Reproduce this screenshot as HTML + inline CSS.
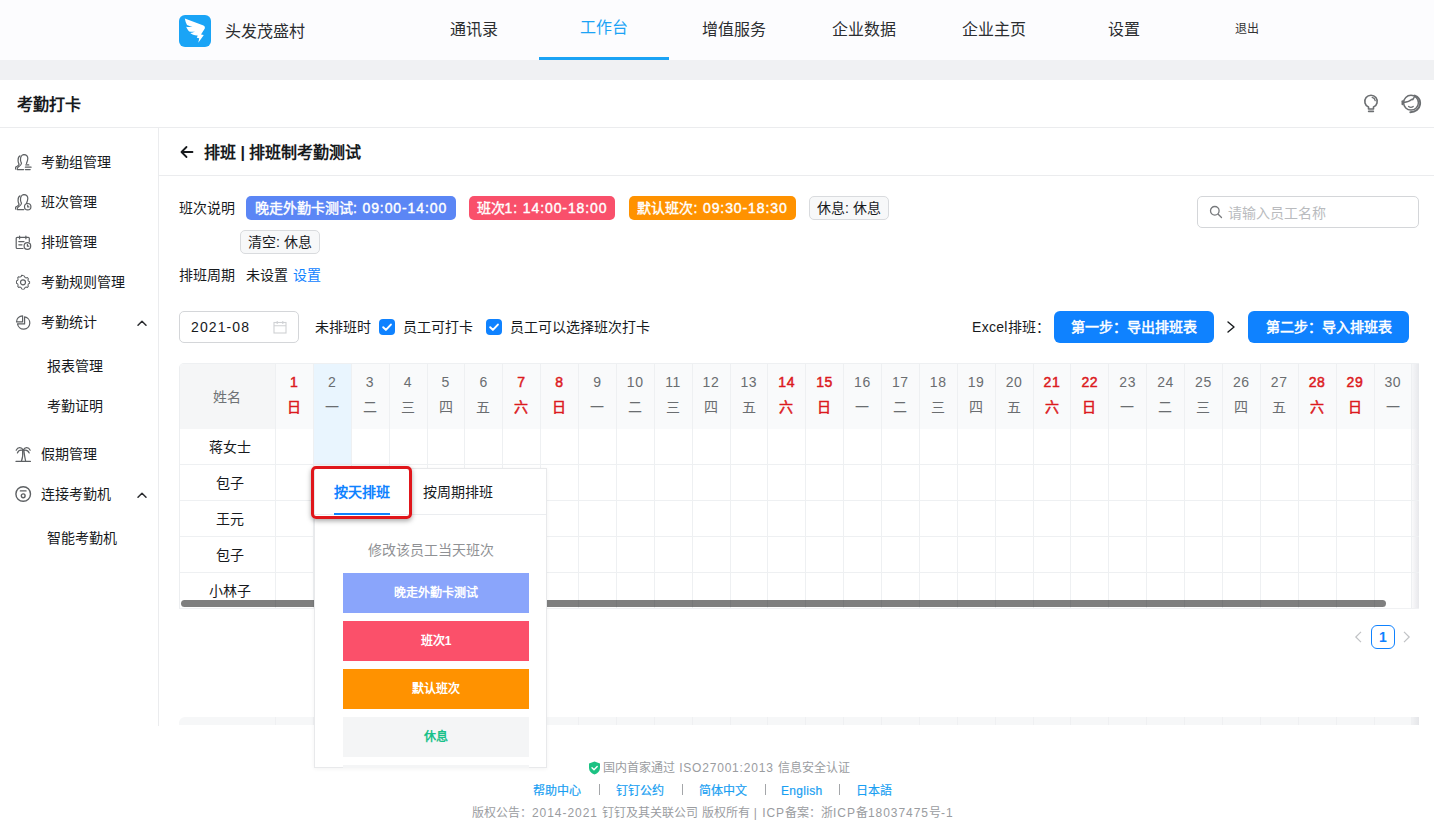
<!DOCTYPE html>
<html lang="zh-CN">
<head>
<meta charset="utf-8">
<title>考勤打卡</title>
<style>
*{box-sizing:border-box;margin:0;padding:0}
html,body{width:1434px;height:830px;overflow:hidden;background:#fff}
body{font-family:"Liberation Sans",sans-serif;font-size:14px;color:#171a1d;position:relative}
.abs{position:absolute}
.t{position:absolute;white-space:nowrap;line-height:20px;height:20px}
.n{letter-spacing:.9px}
#nav{position:absolute;left:0;top:0;width:1434px;height:60px;background:#fcfcfe}
#band{position:absolute;left:0;top:60px;width:1434px;height:20px;background:#f0f1f3}
#logo{position:absolute;left:179px;top:15px;width:32px;height:32px;border-radius:6px;background:#1aa4f6;overflow:hidden}
.nv{position:absolute;top:20px;width:130px;height:20px;line-height:20px;text-align:center;font-size:16px;color:#2b2d30;white-space:nowrap}
.nv.on{color:#1ba3f5;top:18px}
#navline{position:absolute;left:539px;top:57px;width:130px;height:3px;background:#1ba3f5}
#phead{position:absolute;left:0;top:80px;width:1434px;height:48px;background:#fff;border-bottom:1px solid #ebecee}
#side{position:absolute;left:0;top:128px;width:159px;height:598px;border-right:1px solid #ebecee;background:#fff}
.si{position:absolute;left:41px;font-size:14px;line-height:20px;height:20px;white-space:nowrap;color:#171a1d}
.si.sub{left:47px}
.ico{position:absolute;left:15px;width:17px;height:17px}
.chev{position:absolute;left:136px;width:12px;height:8px}
#mhead{position:absolute;left:159px;top:128px;width:1275px;height:48px;border-bottom:1px solid #ebecee}
.tag{position:absolute;height:24px;line-height:24px;border-radius:5px;color:#fff;font-size:14px;text-align:center;white-space:nowrap;-webkit-text-stroke:.4px #fff}
.tag.g{background:#f7f8f9;border:1px solid #d9dbde;color:#171a1d;line-height:22px;-webkit-text-stroke:0}
.cb{position:absolute;width:16px;height:16px;border-radius:4px;background:#0f82ff}
.btn{position:absolute;top:311px;height:32px;line-height:32px;border-radius:6px;background:#0f82ff;color:#fff;font-size:14px;-webkit-text-stroke:.5px #fff;text-align:center;white-space:nowrap}
#tbl{position:absolute;left:179px;top:363px;width:1240px;height:246px;overflow:hidden;border-radius:5px 0 0 0;border-left:1px solid #eceef0;border-top:1px solid #eef0f2;border-bottom:1px solid #f0f1f3}
#thead{position:absolute;left:0;top:0;width:1240px;height:65px;background:#f9fafb}
#thn{position:absolute;left:0;top:0;width:96px;height:65px;background:#f5f6f7}
.vl{position:absolute;top:0;width:1px;height:245px;background:#eef0f2}
.hl{position:absolute;left:0;width:1240px;height:1px;background:#eef0f2}
.dn{position:absolute;top:8px;width:38px;text-align:center;font-size:14px;line-height:20px;color:#6a6d70;letter-spacing:.6px;text-indent:.6px}
.dw{position:absolute;top:33px;width:38px;text-align:center;font-size:14px;line-height:20px;color:#6a6d70}
.red{color:#dc1a1e;-webkit-text-stroke:.5px #dc1a1e}
.nm{position:absolute;left:-1px;width:97px;text-align:center;font-size:14px;line-height:20px;color:#171a1d;padding-left:4px}
#pop{position:absolute;left:314px;top:468px;width:233px;height:300px;background:#fff;border:1px solid #e8e9eb;box-shadow:0 1px 4px rgba(0,0,0,.05)}
.pb{position:absolute;left:28px;width:186px;height:40px;line-height:40px;text-align:center;color:#fff;font-size:12px;font-weight:bold}
#redbox{position:absolute;left:311px;top:466px;width:101px;height:53px;border:3px solid #e0161b;border-radius:5px;box-shadow:0 2px 5px rgba(0,0,0,.35)}
.ft{position:absolute;font-size:12px;line-height:16px;height:16px;white-space:nowrap;color:#9a9c9f}
.ft .n{letter-spacing:.8px}
.ft .m{letter-spacing:.95px}
.fl{color:#1a9ff2;-webkit-text-stroke:.2px #1a9ff2}
</style>
</head>
<body>
<div id="nav">
<div id="logo"><svg width="32" height="32" viewBox="0 0 32 32"><path fill="#fff" d="M5.8 3.4L24.5 10.6Q26.6 11.6 25.8 13.6L22 19.6L24.8 20L19.3 27.7L20.2 23.3L17.8 22.7L18.7 20.4C16 20.6 13 19.8 11.3 18.1C13 18 14.8 17.5 16 16.6C14 16.9 12 16.9 10.2 16.4C9 15.2 7.8 13.6 7.2 11.8C9 12.2 11.5 12.2 13.5 11.6C11.5 11.4 9.5 10.9 8 10.1C7 8 6.2 5.6 5.8 3.4Z"/></svg></div>
<div class="t" style="left:225px;top:22px;font-size:16px;color:#2b2d30">头发茂盛村</div>
<div class="nv" style="left:409px">通讯录</div>
<div class="nv on" style="left:539px">工作台</div>
<div class="nv" style="left:669px">增值服务</div>
<div class="nv" style="left:799px">企业数据</div>
<div class="nv" style="left:929px">企业主页</div>
<div class="nv" style="left:1059px">设置</div>
<div id="navline"></div>
<div class="t" style="left:1235px;top:19px;font-size:12px;color:#333">退出</div>
</div>
<div id="band"></div>
<div id="phead"><div class="t" style="left:17px;top:15px;font-size:16px;font-weight:bold;color:#171a1d">考勤打卡</div>
<svg class="abs" style="left:1362px;top:12px" width="18" height="22" viewBox="0 0 18 22" fill="none" stroke="#6c6f72" stroke-width="1.6" stroke-linecap="round" stroke-linejoin="round"><path d="M6.5 17V15.1A6.2 6.2 0 1 1 11.5 15.1V17z"/><path d="M6.7 19.3h4.6" stroke-width="1.8"/><path d="M10.2 5.4a4.2 4.2 0 0 1 3 3.2" stroke-width="1.3"/></svg>
<svg class="abs" style="left:1400px;top:12px" width="22" height="22" viewBox="0 0 22 22" fill="none" stroke="#6c6f72" stroke-width="1.5" stroke-linecap="round" stroke-linejoin="round"><circle cx="11" cy="10.7" r="7.4"/><path d="M3.6 10.4C7 10 10 9 12 7.2l.8.5 1.5-2.7"/><path d="M8.6 14.4q2.3 1.9 4.6 0" stroke-width="1.3"/><path d="M14.8 3.6C18.5 5 20.6 8.5 20 12.5 19.4 17 15.5 20.3 10.3 20.3" stroke-width="1.9"/><path d="M2.5 9.3v2.9" stroke-width="2"/></svg>
</div>
<div id="side">
<div class="si" style="top:24px">考勤组管理</div>
<div class="si" style="top:64px">班次管理</div>
<div class="si" style="top:104px">排班管理</div>
<div class="si" style="top:144px">考勤规则管理</div>
<div class="si" style="top:184px">考勤统计</div>
<div class="si sub" style="top:228px">报表管理</div>
<div class="si sub" style="top:268px">考勤证明</div>
<div class="si" style="top:316px">假期管理</div>
<div class="si" style="top:356px">连接考勤机</div>
<div class="si sub" style="top:400px">智能考勤机</div>
<svg class="ico" style="top:25.5px" viewBox="0 0 17 17" fill="none" stroke="#5d6063" stroke-width="1.2" stroke-linecap="round" stroke-linejoin="round"><path d="M8.9 .7C6.5 .7 5.3 3 5.5 6 5.6 7.5 6.2 8.5 6.5 9.3 6.3 11.5 4.5 12.3 3.2 13 2.4 13.5 2.2 14.2 2.2 15.6H8.6"/><path d="M8.9 .7C11.5 .7 12.9 2.2 12.8 4.5 12.7 6.5 12 8 11.5 9.5"/><path d="M5 1.9C3.5 2.5 3 4.5 3.1 6.9 3.2 8.5 3.8 9.5 4.1 10.3 3.5 12 1.8 12.3 .9 13 .4 13.6 .5 14.4 .7 15.2"/><path d="M10.8 10.9h3M10.4 13.2h5.7M10.4 15.6h4.8"/></svg>
<svg class="ico" style="top:65.5px" viewBox="0 0 17 17" fill="none" stroke="#5d6063" stroke-width="1.2" stroke-linecap="round" stroke-linejoin="round"><path d="M8.9 .7C6.5 .7 5.3 3 5.5 6 5.6 7.5 6.2 8.5 6.5 9.3 6.3 11.5 4.5 12.3 3.2 13 2.4 13.5 2.2 14.2 2.2 15.6H8.8"/><path d="M8.9 .7C11.5 .7 12.9 2.2 12.8 4.5 12.7 6.5 12 8 11.5 9.5"/><path d="M5 1.9C3.5 2.5 3 4.5 3.1 6.9 3.2 8.5 3.8 9.5 4.1 10.3 3.5 12 1.8 12.3 .9 13 .4 13.6 .5 14.4 .7 15.2"/><circle cx="12.7" cy="12.7" r="3.2"/><path d="M12.7 11.2v1.7h1.2"/></svg>
<svg class="ico" style="top:105.5px" viewBox="0 0 17 17" fill="none" stroke="#5d6063" stroke-width="1.2" stroke-linecap="round" stroke-linejoin="round"><path d="M14.3 7.5V4.3a1 1 0 0 0-1-1H2.2a1 1 0 0 0-1 1v9.2a1 1 0 0 0 1 1h5.8"/><path d="M4.6 2v2.8M10.9 2v2.8M3.8 7.6h5.2M3.8 10.8h3.2"/><circle cx="12.4" cy="12" r="3.3"/><path d="M12.4 10.4v1.8h1.4"/></svg>
<svg class="ico" style="top:145.5px" viewBox="0 0 17 17" fill="none" stroke="#5d6063" stroke-width="1.2" stroke-linecap="round" stroke-linejoin="round"><path d="M8.5 1.2l1.7.6.5 1.5 1.5.7 1.5-.5 1.2 1.4-.6 1.5.6 1.4 1.4.7v1.8l-1.4.7-.6 1.5.6 1.4-1.2 1.4-1.5-.5-1.5.7-.5 1.5-1.7.5-1.7-.5-.5-1.5-1.5-.7-1.5.5-1.2-1.4.6-1.4-.6-1.5-1.4-.7V7.5l1.4-.7.6-1.4-.6-1.5 1.2-1.4 1.5.5 1.5-.7.5-1.5z" transform="translate(.9 .6) scale(.84)"/><circle cx="8" cy="8.3" r="2.5"/></svg>
<svg class="ico" style="top:185.5px" viewBox="0 0 17 17" fill="none" stroke="#5d6063" stroke-width="1.2" stroke-linecap="round" stroke-linejoin="round"><path d="M9.6 2.8A6.2 6.2 0 1 1 2.5 9.9H9.6z"/><path d="M7.6 7.9V1.8A6.1 6.1 0 0 0 1.5 7.9z"/></svg>
<svg class="ico" style="top:317.5px" viewBox="0 0 17 17" fill="none" stroke="#5d6063" stroke-width="1.2" stroke-linecap="round" stroke-linejoin="round"><path d="M1 15.4h14.4"/><path d="M6.4 15.2C7.8 12 8 8 7.6 4.2M10.6 15.2C9.9 12 9.3 8 8.8 4.2"/><path d="M8.2 4C6.5 .8 2.8 1 1.2 4.2M8.2 4C10 .8 13.6 1 15.2 4.2M7.8 4.4C5.5 3.7 3.3 4.8 2.4 7M8.8 4.4C11 3.7 13.2 4.8 14.2 7"/></svg>
<svg class="ico" style="top:357.5px" viewBox="0 0 17 17" fill="none" stroke="#5d6063" stroke-width="1.2" stroke-linecap="round" stroke-linejoin="round"><circle cx="8.2" cy="8" r="7.3" stroke-width="1.4"/><path d="M5.4 4.9h5.6" stroke-width="1.4"/><circle cx="8.2" cy="9.8" r="1.9" stroke-width="1.4"/></svg>
<svg class="chev" style="top:191px" viewBox="0 0 12 8" fill="none" stroke="#2a2c2f" stroke-width="1.5" stroke-linecap="round" stroke-linejoin="round"><path d="M2 6.3L6 2.3l4 4"/></svg>
<svg class="chev" style="top:363px" viewBox="0 0 12 8" fill="none" stroke="#2a2c2f" stroke-width="1.5" stroke-linecap="round" stroke-linejoin="round"><path d="M2 6.3L6 2.3l4 4"/></svg>
</div>
<div id="mhead">
<svg class="abs" style="left:21px;top:17px" width="14" height="14" viewBox="0 0 14 14" fill="none" stroke="#171a1d" stroke-width="1.8" stroke-linecap="round" stroke-linejoin="round"><path d="M12.5 7H1.8M6.5 2L1.5 7l5 5"/></svg>
<div class="t" style="left:45px;top:15px;font-size:16px;font-weight:bold;color:#171a1d">排班 | 排班制考勤测试</div>
</div>
<div class="t" style="left:179px;top:198px">班次说明</div>
<div class="tag" style="left:246px;top:196px;width:210px;background:#5b86f5">晚走外勤卡测试<span class="n">: 09:00-14:00</span></div>
<div class="tag" style="left:469px;top:196px;width:146px;background:#f9506b">班次<span class="n">1: 14:00-18:00</span></div>
<div class="tag" style="left:629px;top:196px;width:167px;background:#ff9200">默认班次<span class="n">: 09:30-18:30</span></div>
<div class="tag g" style="left:809px;top:196px;width:80px">休息: 休息</div>
<div class="tag g" style="left:240px;top:230px;width:80px">清空: 休息</div>
<div class="t" style="left:179px;top:265px">排班周期</div>
<div class="t" style="left:246px;top:265px">未设置 <span style="color:#0f82ff;margin-left:1.5px">设置</span></div>
<div class="abs" style="left:1197px;top:196px;width:222px;height:32px;border:1px solid #d4d6d9;border-radius:5px;background:#fff"></div>
<svg class="abs" style="left:1209px;top:205px" width="14" height="14" viewBox="0 0 14 14" fill="none" stroke="#77797c" stroke-width="1.3" stroke-linecap="round"><circle cx="5.8" cy="5.8" r="4.3"/><path d="M9.2 9.2l3.3 3.3"/></svg>
<div class="t" style="left:1228px;top:203px;color:#b9bbbe">请输入员工名称</div>
<div class="abs" style="left:179px;top:311px;width:120px;height:32px;border:1px solid #d4d6d9;border-radius:5px;background:#fff"></div>
<div class="t" style="left:191px;top:317px;letter-spacing:1.1px">2021-08</div>
<svg class="abs" style="left:273px;top:320px" width="14" height="14" viewBox="0 0 14 14" fill="none" stroke="#cfd1d4" stroke-width="1.1"><rect x="1" y="2.5" width="12" height="10.5"/><path d="M1 5.8h12M4.2 1v3M9.8 1v3"/></svg>
<div class="t" style="left:315px;top:317px">未排班时</div>
<div class="cb" style="left:379px;top:319px"><svg width="16" height="16" viewBox="0 0 16 16" fill="none" stroke="#fff" stroke-width="2" stroke-linecap="round" stroke-linejoin="round"><path d="M4.2 8.2l2.7 2.7 5-5.3"/></svg></div>
<div class="t" style="left:403px;top:317px">员工可打卡</div>
<div class="cb" style="left:486px;top:319px"><svg width="16" height="16" viewBox="0 0 16 16" fill="none" stroke="#fff" stroke-width="2" stroke-linecap="round" stroke-linejoin="round"><path d="M4.2 8.2l2.7 2.7 5-5.3"/></svg></div>
<div class="t" style="left:510px;top:317px">员工可以选择班次打卡</div>
<div class="t" style="left:972px;top:317px"><span style="letter-spacing:.3px">Excel</span>排班：</div>
<div class="btn" style="left:1054px;width:160px">第一步：导出排班表</div>
<svg class="abs" style="left:1226px;top:320px" width="10" height="14" viewBox="0 0 10 14" fill="none" stroke="#171a1d" stroke-width="1.4" stroke-linecap="round" stroke-linejoin="round"><path d="M2 2l6 5-6 5"/></svg>
<div class="btn" style="left:1248px;width:161px">第二步：导入排班表</div>
<div id="tbl">
<div id="thead"></div><div id="thn"></div>
<div class="abs" style="left:132.88px;top:0;width:37.88px;height:101px;background:#e9f5fe"></div>
<div class="abs" style="left:1232.4px;top:0;width:8px;height:65px;background:linear-gradient(90deg,#f5f6f8 0,#eeeff2 45%,#e4e6e9 100%)"></div>
<div class="abs" style="left:1232.4px;top:65px;width:8px;height:180px;background:linear-gradient(90deg,#fafafb 0,#efeff2 50%,#e5e6e9 100%)"></div>
<div class="vl" style="left:95px"></div>
<div class="vl" style="left:132.88px"></div>
<div class="vl" style="left:170.76px"></div>
<div class="vl" style="left:208.64px"></div>
<div class="vl" style="left:246.52px"></div>
<div class="vl" style="left:284.4px"></div>
<div class="vl" style="left:322.28px"></div>
<div class="vl" style="left:360.16px"></div>
<div class="vl" style="left:398.04px"></div>
<div class="vl" style="left:435.92px"></div>
<div class="vl" style="left:473.8px"></div>
<div class="vl" style="left:511.68px"></div>
<div class="vl" style="left:549.56px"></div>
<div class="vl" style="left:587.44px"></div>
<div class="vl" style="left:625.32px"></div>
<div class="vl" style="left:663.2px"></div>
<div class="vl" style="left:701.08px"></div>
<div class="vl" style="left:738.96px"></div>
<div class="vl" style="left:776.84px"></div>
<div class="vl" style="left:814.72px"></div>
<div class="vl" style="left:852.6px"></div>
<div class="vl" style="left:890.48px"></div>
<div class="vl" style="left:928.36px"></div>
<div class="vl" style="left:966.24px"></div>
<div class="vl" style="left:1004.12px"></div>
<div class="vl" style="left:1042px"></div>
<div class="vl" style="left:1079.88px"></div>
<div class="vl" style="left:1117.76px"></div>
<div class="vl" style="left:1155.64px"></div>
<div class="vl" style="left:1193.52px"></div>
<div class="vl" style="left:1231.4px"></div>
<div class="hl" style="top:100px"></div>
<div class="hl" style="top:136px"></div>
<div class="hl" style="top:172px"></div>
<div class="hl" style="top:208px"></div>
<div class="dn red" style="left:95px">1</div>
<div class="dw red" style="left:95px">日</div>
<div class="dn" style="left:132.88px">2</div>
<div class="dw" style="left:132.88px">一</div>
<div class="dn" style="left:170.76px">3</div>
<div class="dw" style="left:170.76px">二</div>
<div class="dn" style="left:208.64px">4</div>
<div class="dw" style="left:208.64px">三</div>
<div class="dn" style="left:246.52px">5</div>
<div class="dw" style="left:246.52px">四</div>
<div class="dn" style="left:284.4px">6</div>
<div class="dw" style="left:284.4px">五</div>
<div class="dn red" style="left:322.28px">7</div>
<div class="dw red" style="left:322.28px">六</div>
<div class="dn red" style="left:360.16px">8</div>
<div class="dw red" style="left:360.16px">日</div>
<div class="dn" style="left:398.04px">9</div>
<div class="dw" style="left:398.04px">一</div>
<div class="dn" style="left:435.92px">10</div>
<div class="dw" style="left:435.92px">二</div>
<div class="dn" style="left:473.8px">11</div>
<div class="dw" style="left:473.8px">三</div>
<div class="dn" style="left:511.68px">12</div>
<div class="dw" style="left:511.68px">四</div>
<div class="dn" style="left:549.56px">13</div>
<div class="dw" style="left:549.56px">五</div>
<div class="dn red" style="left:587.44px">14</div>
<div class="dw red" style="left:587.44px">六</div>
<div class="dn red" style="left:625.32px">15</div>
<div class="dw red" style="left:625.32px">日</div>
<div class="dn" style="left:663.2px">16</div>
<div class="dw" style="left:663.2px">一</div>
<div class="dn" style="left:701.08px">17</div>
<div class="dw" style="left:701.08px">二</div>
<div class="dn" style="left:738.96px">18</div>
<div class="dw" style="left:738.96px">三</div>
<div class="dn" style="left:776.84px">19</div>
<div class="dw" style="left:776.84px">四</div>
<div class="dn" style="left:814.72px">20</div>
<div class="dw" style="left:814.72px">五</div>
<div class="dn red" style="left:852.6px">21</div>
<div class="dw red" style="left:852.6px">六</div>
<div class="dn red" style="left:890.48px">22</div>
<div class="dw red" style="left:890.48px">日</div>
<div class="dn" style="left:928.36px">23</div>
<div class="dw" style="left:928.36px">一</div>
<div class="dn" style="left:966.24px">24</div>
<div class="dw" style="left:966.24px">二</div>
<div class="dn" style="left:1004.12px">25</div>
<div class="dw" style="left:1004.12px">三</div>
<div class="dn" style="left:1042px">26</div>
<div class="dw" style="left:1042px">四</div>
<div class="dn" style="left:1079.88px">27</div>
<div class="dw" style="left:1079.88px">五</div>
<div class="dn red" style="left:1117.76px">28</div>
<div class="dw red" style="left:1117.76px">六</div>
<div class="dn red" style="left:1155.64px">29</div>
<div class="dw red" style="left:1155.64px">日</div>
<div class="dn" style="left:1193.52px">30</div>
<div class="dw" style="left:1193.52px">一</div>
<div class="nm" style="top:23px;color:#6f7275;padding-left:0;left:-2px">姓名</div>
<div class="nm" style="top:73px">蒋女士</div>
<div class="nm" style="top:109px">包子</div>
<div class="nm" style="top:145px">王元</div>
<div class="nm" style="top:181px">包子</div>
<div class="nm" style="top:217px">小林子</div>
<div class="abs" style="left:1px;top:236px;width:1205px;height:7px;border-radius:4px;background:rgba(0,0,0,.5)"></div>
</div>
<div class="abs" style="left:179px;top:717px;width:1240px;height:8px;background:#f6f7f8;border-radius:6px 0 0 0"></div>
<div class="abs" style="left:1412px;top:717px;width:7px;height:8px;background:linear-gradient(90deg,#f0f1f3,#e5e6e9)"></div>
<div class="abs" style="left:275px;top:717px;width:1px;height:8px;background:#eff0f2"></div>
<div class="abs" style="left:312.88px;top:717px;width:1px;height:8px;background:#eff0f2"></div>
<div class="abs" style="left:350.76px;top:717px;width:1px;height:8px;background:#eff0f2"></div>
<div class="abs" style="left:388.64px;top:717px;width:1px;height:8px;background:#eff0f2"></div>
<div class="abs" style="left:426.52px;top:717px;width:1px;height:8px;background:#eff0f2"></div>
<div class="abs" style="left:464.4px;top:717px;width:1px;height:8px;background:#eff0f2"></div>
<div class="abs" style="left:502.28px;top:717px;width:1px;height:8px;background:#eff0f2"></div>
<div class="abs" style="left:540.16px;top:717px;width:1px;height:8px;background:#eff0f2"></div>
<div class="abs" style="left:578.04px;top:717px;width:1px;height:8px;background:#eff0f2"></div>
<div class="abs" style="left:615.92px;top:717px;width:1px;height:8px;background:#eff0f2"></div>
<div class="abs" style="left:653.8px;top:717px;width:1px;height:8px;background:#eff0f2"></div>
<div class="abs" style="left:691.68px;top:717px;width:1px;height:8px;background:#eff0f2"></div>
<div class="abs" style="left:729.56px;top:717px;width:1px;height:8px;background:#eff0f2"></div>
<div class="abs" style="left:767.44px;top:717px;width:1px;height:8px;background:#eff0f2"></div>
<div class="abs" style="left:805.32px;top:717px;width:1px;height:8px;background:#eff0f2"></div>
<div class="abs" style="left:843.2px;top:717px;width:1px;height:8px;background:#eff0f2"></div>
<div class="abs" style="left:881.08px;top:717px;width:1px;height:8px;background:#eff0f2"></div>
<div class="abs" style="left:918.96px;top:717px;width:1px;height:8px;background:#eff0f2"></div>
<div class="abs" style="left:956.84px;top:717px;width:1px;height:8px;background:#eff0f2"></div>
<div class="abs" style="left:994.72px;top:717px;width:1px;height:8px;background:#eff0f2"></div>
<div class="abs" style="left:1032.6px;top:717px;width:1px;height:8px;background:#eff0f2"></div>
<div class="abs" style="left:1070.48px;top:717px;width:1px;height:8px;background:#eff0f2"></div>
<div class="abs" style="left:1108.36px;top:717px;width:1px;height:8px;background:#eff0f2"></div>
<div class="abs" style="left:1146.24px;top:717px;width:1px;height:8px;background:#eff0f2"></div>
<div class="abs" style="left:1184.12px;top:717px;width:1px;height:8px;background:#eff0f2"></div>
<div class="abs" style="left:1222px;top:717px;width:1px;height:8px;background:#eff0f2"></div>
<div class="abs" style="left:1259.88px;top:717px;width:1px;height:8px;background:#eff0f2"></div>
<div class="abs" style="left:1297.76px;top:717px;width:1px;height:8px;background:#eff0f2"></div>
<div class="abs" style="left:1335.64px;top:717px;width:1px;height:8px;background:#eff0f2"></div>
<div class="abs" style="left:1373.52px;top:717px;width:1px;height:8px;background:#eff0f2"></div>
<div class="abs" style="left:1411.4px;top:717px;width:1px;height:8px;background:#eff0f2"></div>
<svg class="abs" style="left:1354px;top:631px" width="8" height="12" viewBox="0 0 8 12" fill="none" stroke="#c0c2c5" stroke-width="1.2"><path d="M7 .8L1.8 6l5.2 5.2"/></svg>
<div class="abs" style="left:1371px;top:625px;width:24px;height:24px;border:1px solid #0f82ff;border-radius:6px;color:#0f82ff;font-size:14px;font-weight:bold;line-height:22px;text-align:center">1</div>
<svg class="abs" style="left:1403px;top:631px" width="8" height="12" viewBox="0 0 8 12" fill="none" stroke="#c0c2c5" stroke-width="1.2"><path d="M1 .8L6.2 6l-5.2 5.2"/></svg>
<div id="pop">
<div class="t" style="left:19px;top:13px;font-weight:bold;color:#0f82ff">按天排班</div>
<div class="t" style="left:108px;top:13px;color:#171a1d">按周期排班</div>
<div class="abs" style="left:0;top:45px;width:231px;height:1px;background:#ebedf0"></div>
<div class="abs" style="left:19px;top:44px;width:56px;height:2px;background:#0f82ff"></div>
<div class="t" style="left:0;top:71px;width:231px;text-align:center;color:#8f9194">修改该员工当天班次</div>
<div class="pb" style="top:104px;background:#8aa5fb">晚走外勤卡测试</div>
<div class="pb" style="top:152px;background:#fb506a">班次1</div>
<div class="pb" style="top:200px;background:#ff9200">默认班次</div>
<div class="pb" style="top:248px;background:#f4f5f6;color:#19c18a">休息</div>
<div class="abs" style="left:28px;top:296px;width:186px;height:3px;background:#f4f5f6"></div>
</div>
<div id="redbox"></div>
<svg class="abs" style="left:588px;top:761px" width="13" height="14" viewBox="0 0 13 14"><path fill="#1cc283" d="M6.5.5l5.5 2v4.5c0 3.2-2.3 5.5-5.5 6.5C3.3 12.5 1 10.2 1 7V2.5z"/><path d="M4 6.8l2 2 3.2-3.4" fill="none" stroke="#fff" stroke-width="1.4" stroke-linecap="round" stroke-linejoin="round"/></svg>
<div class="ft" style="left:603px;top:760px">国内首家通过<span class="n"> ISO27001:2013 </span>信息安全认证</div>
<div class="ft fl" style="left:533px;top:783px">帮助中心</div>
<div class="ft fl" style="left:616px;top:783px">钉钉公约</div>
<div class="ft fl" style="left:699px;top:783px">简体中文</div>
<div class="ft fl" style="left:781px;top:783px"><span style="letter-spacing:.3px">English</span></div>
<div class="ft fl" style="left:856px;top:783px">日本語</div>
<div class="abs" style="left:599px;top:784px;width:1px;height:11px;background:#a4a6a9"></div>
<div class="abs" style="left:682px;top:784px;width:1px;height:11px;background:#a4a6a9"></div>
<div class="abs" style="left:765px;top:784px;width:1px;height:11px;background:#a4a6a9"></div>
<div class="abs" style="left:839px;top:784px;width:1px;height:11px;background:#a4a6a9"></div>
<div class="ft" style="left:472px;top:805px">版权公告：<span class="m">2014-2021 </span>钉钉及其关联公司 版权所有<span class="m"> | ICP</span>备案：浙<span class="m">ICP</span>备<span class="m">18037475</span>号<span class="m">-1</span></div>
</body>
</html>
